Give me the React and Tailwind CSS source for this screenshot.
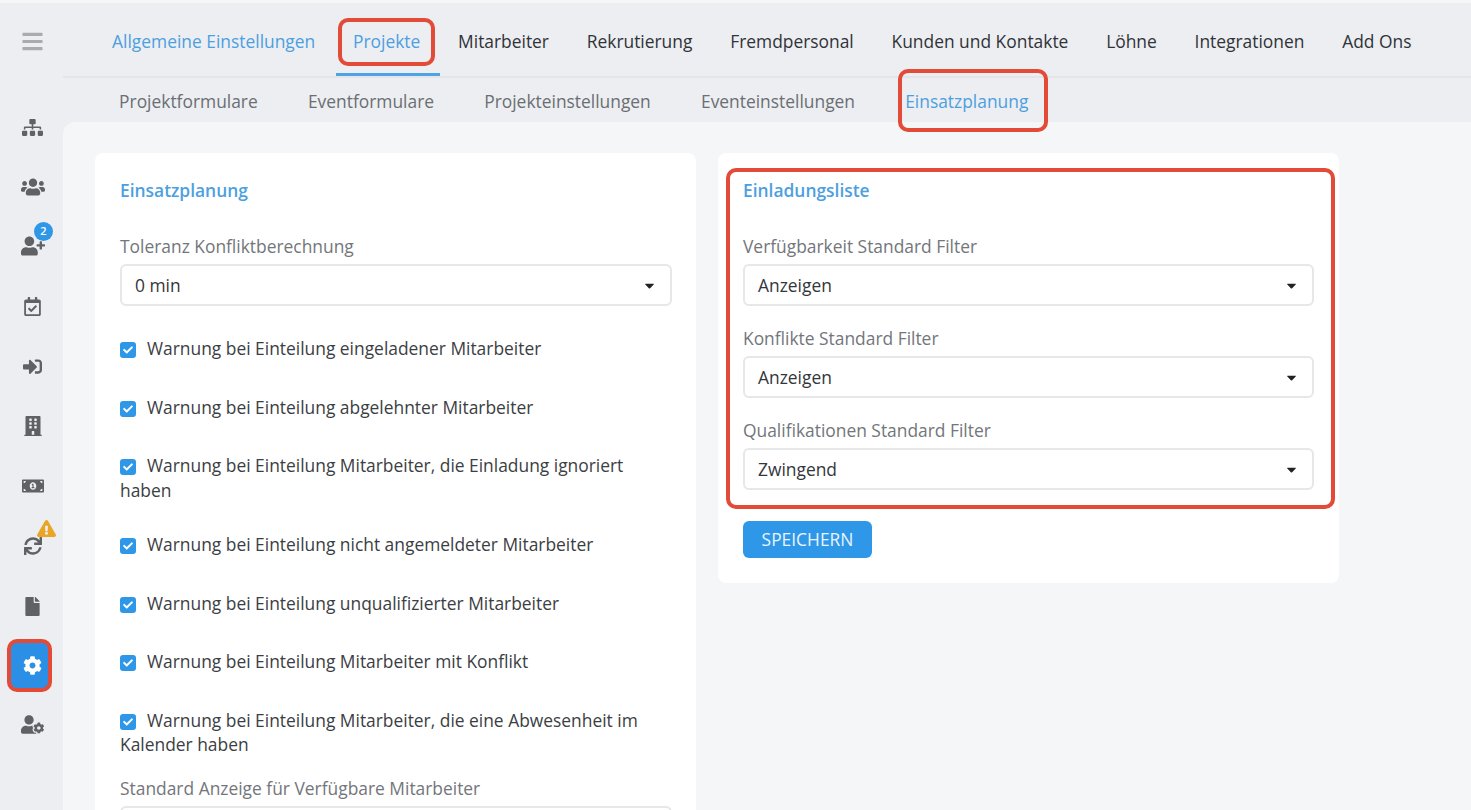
import React from "react";
import { FaBars, FaSitemap, FaUsers, FaUserPlus, FaRegCalendarCheck, FaSignInAlt, FaBuilding, FaMoneyBillAlt, FaSync, FaFile, FaCog, FaUserCog, FaExclamationTriangle, FaCheck, FaCaretDown } from "react-icons/fa";

const mainTabs = ["Allgemeine Einstellungen", "Projekte", "Mitarbeiter", "Rekrutierung", "Fremdpersonal", "Kunden und Kontakte", "Löhne", "Integrationen", "Add Ons"];
const subTabs = ["Projektformulare", "Eventformulare", "Projekteinstellungen", "Eventeinstellungen", "Einsatzplanung"];
const checks = [
  { text: "Warnung bei Einteilung eingeladener Mitarbeiter" },
  { text: "Warnung bei Einteilung abgelehnter Mitarbeiter" },
  { text: "Warnung bei Einteilung Mitarbeiter, die Einladung ignoriert haben", wrap: true },
  { text: "Warnung bei Einteilung nicht angemeldeter Mitarbeiter" },
  { text: "Warnung bei Einteilung unqualifizierter Mitarbeiter" },
  { text: "Warnung bei Einteilung Mitarbeiter mit Konflikt" },
  { text: "Warnung bei Einteilung Mitarbeiter, die eine Abwesenheit im Kalender haben", wrap: true },
];

function Select({ value }) {
  return (
    <div className="flex h-[42px] items-center justify-between rounded-[6px] border-2 border-[#e6e7e9] bg-white pl-[13px] pr-[13px] text-[#33363b]">
      <span>{value}</span>
      <FaCaretDown className="text-[15px] text-[#222]" />
    </div>
  );
}

function Field({ label, value }) {
  return (
    <div>
      <div className="mb-[6px] h-[24px] leading-[24px] text-[#73767b]">{label}</div>
      <Select value={value} />
    </div>
  );
}

function SideItem({ children }) {
  return <div className="relative flex h-[60px] items-center justify-center text-[#5f6165]">{children}</div>;
}

const Mark = ({ className }) => (
  <span className={`pointer-events-none absolute rounded-[10px] border-[4px] border-[#e24b37] ${className}`} />
);

export default function App() {
  return (
    <div className="flex h-[810px] w-[1471px] overflow-hidden border-t-[3px] border-[#f6f6f7] bg-[#eceef1] font-['Open_Sans',sans-serif] text-[17.4px] leading-[24.5px]">
      <aside className="flex w-[63px] shrink-0 flex-col pl-[2px]">
        <div className="flex h-[76px] items-center justify-center text-[#a9abad]">
          <FaBars className="text-[23px]" />
        </div>
        <div className="h-[18px]" />
        <SideItem><FaSitemap className="text-[21px]" /></SideItem>
        <SideItem><FaUsers className="text-[24px]" /></SideItem>
        <div className="-mt-[1px]">
          <SideItem>
            <FaUserPlus className="text-[24px]" />
            <span className="absolute left-[32px] top-[6px] flex h-[19px] w-[19px] items-center justify-center rounded-full bg-[#2f97e8] text-[11px] font-semibold text-white">2</span>
          </SideItem>
        </div>
        <SideItem><FaRegCalendarCheck className="text-[19px]" /></SideItem>
        <SideItem><FaSignInAlt className="text-[19px]" /></SideItem>
        <SideItem><FaBuilding className="text-[20px]" /></SideItem>
        <SideItem><FaMoneyBillAlt className="text-[22px]" /></SideItem>
        <SideItem>
          <FaSync className="text-[18px]" />
          <FaExclamationTriangle className="absolute left-[35px] top-[3px] text-[19px] text-[#eba524]" />
        </SideItem>
        <SideItem><FaFile className="text-[19px]" /></SideItem>
        <div className="-mt-[1px]">
          <SideItem>
            <div className="relative mr-[4px] flex h-[47px] w-[41px] items-center justify-center rounded-[6px] bg-[#2b90e5] pl-[4px] text-white">
              <FaCog className="text-[19px]" />
              <Mark className="-bottom-[3px] -left-[3px] -right-[1px] -top-[3px]" />
            </div>
          </SideItem>
        </div>
        <div className="-mt-[1px]">
          <SideItem><FaUserCog className="text-[23px]" /></SideItem>
        </div>
      </aside>

      <main className="flex min-w-0 flex-1 flex-col">
        <nav className="flex h-[75px] shrink-0 items-stretch border-b-2 border-[#e3e5e8] pl-[30.2px]">
          {mainTabs.map((t, i) => (
            <div key={t} className={`relative flex items-center whitespace-nowrap px-[18.9px] pt-[3px] ${i < 2 ? "text-[#4d9fe0]" : "text-[#303338]"}`}>
              {t}
              {i === 1 && <span className="absolute -right-[1px] bottom-0 left-[2px] h-[3px] bg-[#4ea3e6]" />}
              {i === 1 && <Mark className="inset-x-[4px] bottom-[10px] top-[15px]" />}
            </div>
          ))}
        </nav>
        <nav className="flex h-[44px] shrink-0 items-center pl-[31px] pt-[2px]">
          {subTabs.map((t, i) => (
            <div key={t} className={`relative whitespace-nowrap px-[25.1px] ${i === 4 ? "text-[#4d9fe0]" : "text-[#6b6e73]"}`}>
              {t}
              {i === 4 && <Mark className="-bottom-[19px] -top-[20px] left-[18px] right-[5px]" />}
            </div>
          ))}
        </nav>
        <div className="flex flex-1 items-start gap-[22px] rounded-tl-[12px] bg-[#f5f6f8] pl-[32px] pt-[31px]">
          <section className="w-[601px] shrink-0 rounded-[8px] bg-white pl-[25px] pr-[24px] pt-[25px]">
            <h2 className="h-[24px] font-semibold leading-[24px] text-[#4d9fe0]">Einsatzplanung</h2>
            <div className="mt-[32px]">
              <Field label="Toleranz Konfliktberechnung" value="0 min" />
            </div>
            <div className="mt-[30px] flex flex-col gap-[34px] text-[#3b3e43]">
              {checks.map((c) => (
                <div key={c.text} className={c.wrap ? "-mb-[4px]" : ""}>
                  <span className="mr-[11px] inline-flex h-[16px] w-[16px] items-center justify-center rounded-[3px] bg-[#2f97e8] text-white">
                    <FaCheck className="text-[10px]" />
                  </span>
                  {c.text}
                </div>
              ))}
            </div>
            <div className="mt-[23px]">
              <Field label="Standard Anzeige für Verfügbare Mitarbeiter" value="" />
            </div>
          </section>
          <section className="w-[621px] shrink-0 rounded-[8px] bg-white px-[25px] pb-[25px] pt-[25px]">
            <div className="relative">
              <Mark className="-bottom-[19px] -left-[17px] -right-[21px] -top-[10px]" />
              <h2 className="h-[24px] font-semibold leading-[24px] text-[#4d9fe0]">Einladungsliste</h2>
              <div className="mt-[32px] flex flex-col gap-[20px]">
                <Field label="Verfügbarkeit Standard Filter" value="Anzeigen" />
                <Field label="Konflikte Standard Filter" value="Anzeigen" />
                <Field label="Qualifikationen Standard Filter" value="Zwingend" />
              </div>
            </div>
            <button className="mt-[31px] block h-[37px] w-[129px] rounded-[6px] bg-[#2f97e8] text-[17.4px] font-medium text-[#e8f5ff]">SPEICHERN</button>
          </section>
        </div>
      </main>
    </div>
  );
}
